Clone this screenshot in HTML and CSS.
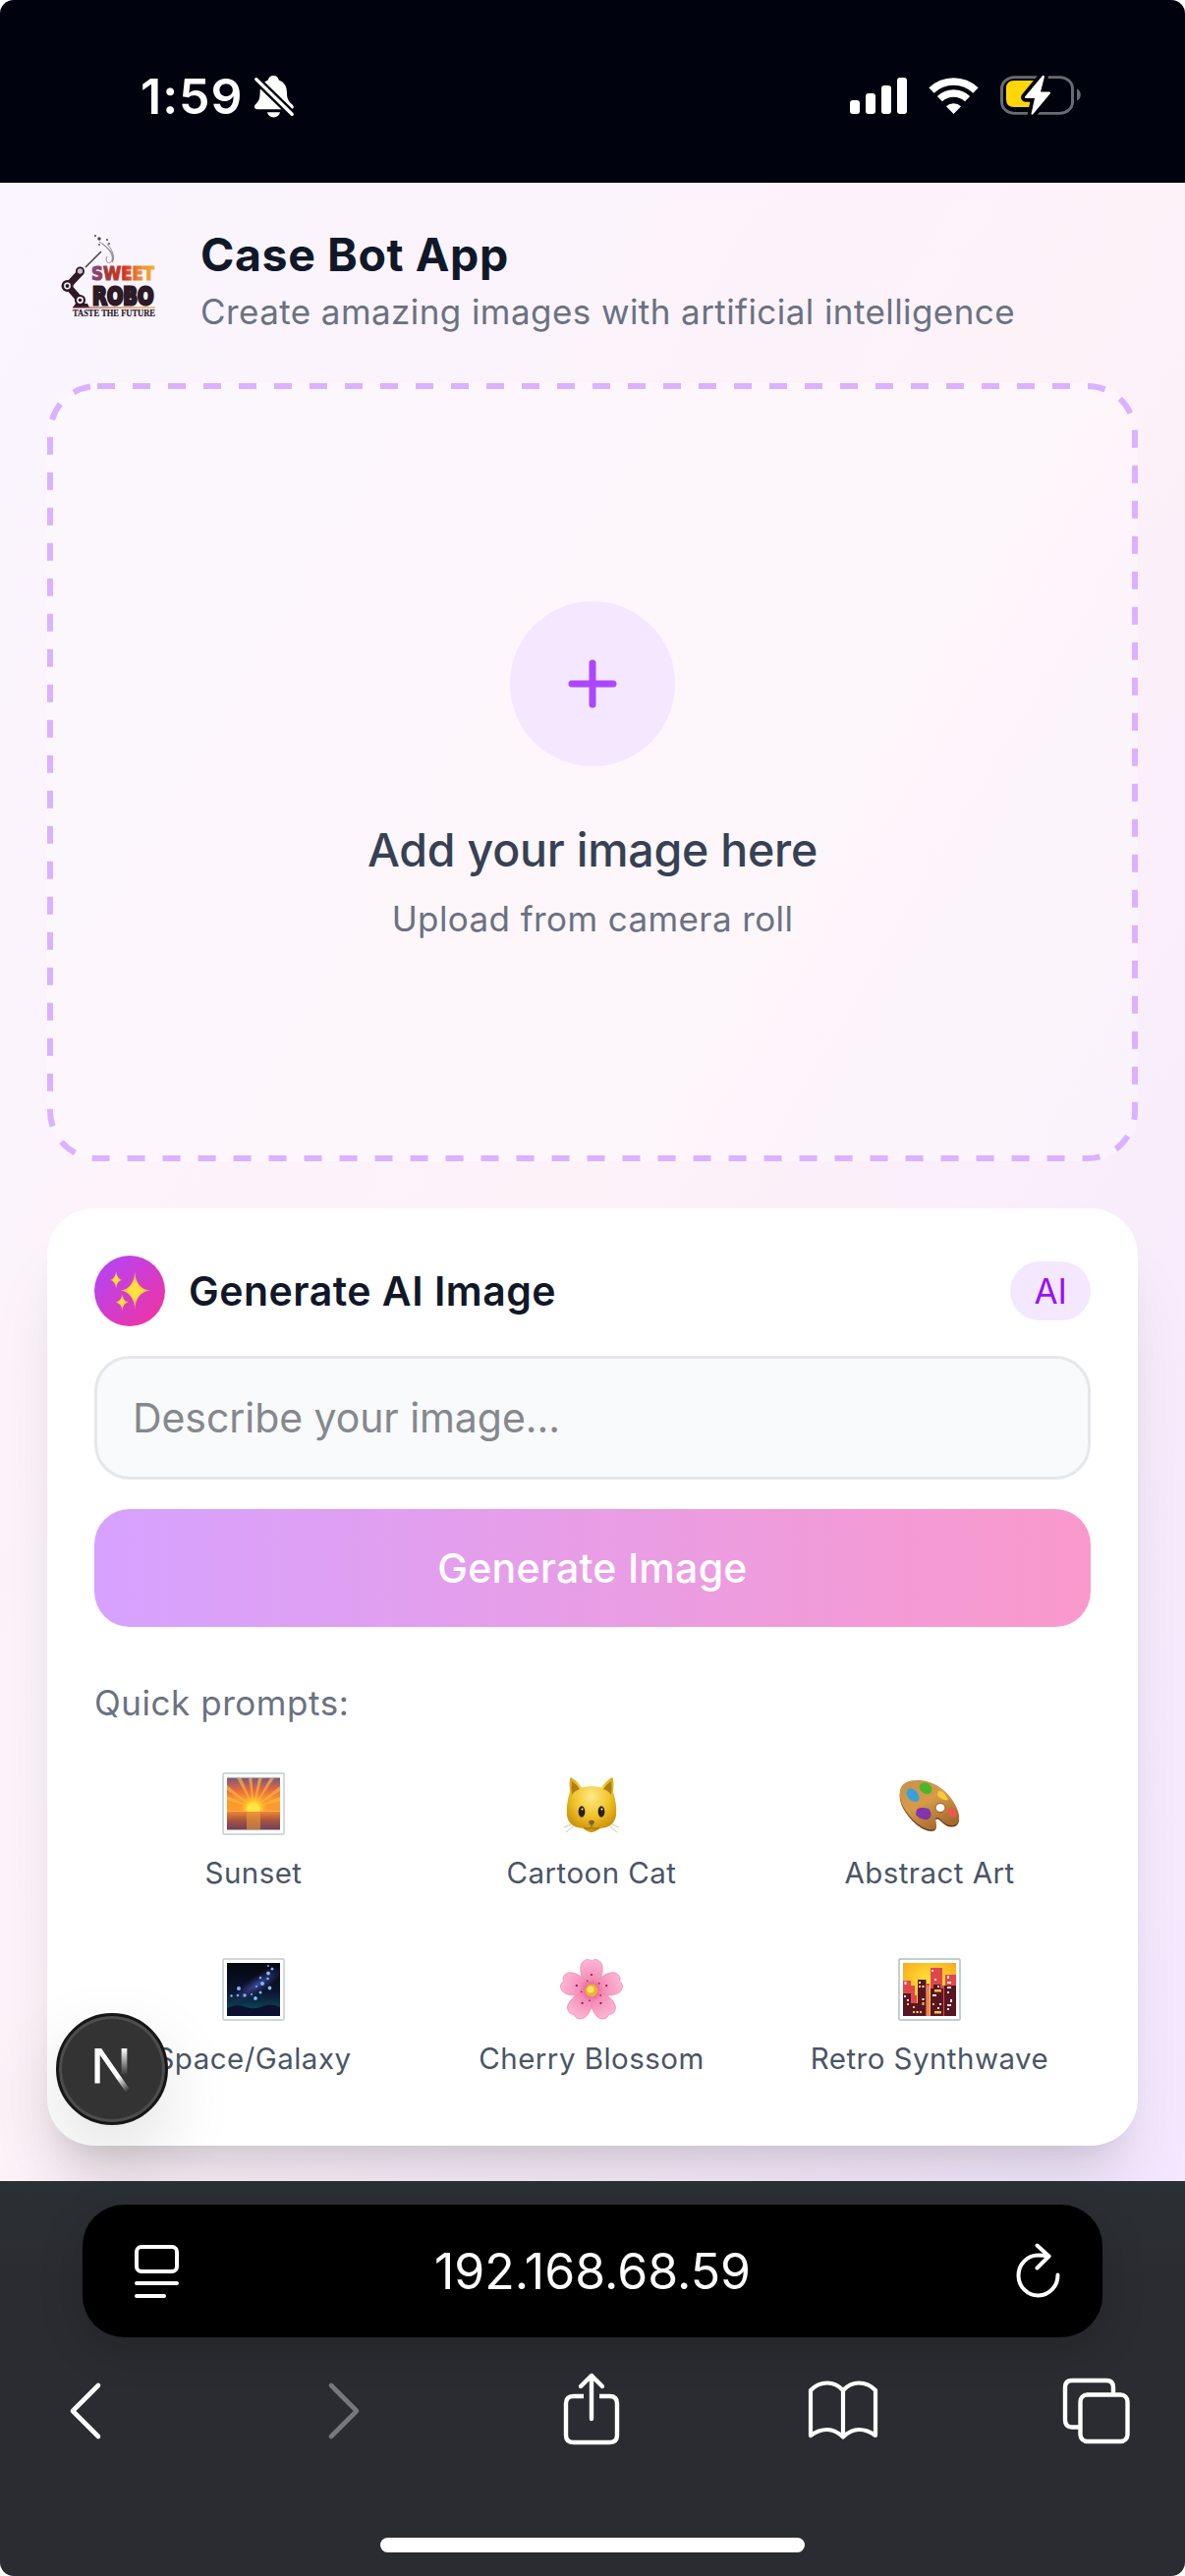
FILE: index.html
```html
<!DOCTYPE html>
<html lang="en">
<head>
<meta charset="utf-8">
<title>Case Bot App</title>
<link rel="stylesheet" href="styles.css">
</head>
<body>
<div class="screen">
  <div class="status">
    <div class="status-left">
      <span class="clock">1:59</span>
      <svg class="bell" width="40" height="43" viewBox="0 0 40 43">
        <path d="M19.3 0C22.3 0 24.4 2 24.8 4.6C30.6 6.8 33 11.6 33 17.5C33 24.5 35.2 26.6 38.6 29.6C41 32 39.6 34.2 37 34.2H3C0 34.2-1 31.4 1 29.3C4 26.3 5.6 24 5.6 17.5C5.6 11.6 8.4 6.8 13.8 4.6C14.2 2 16.3 0 19.3 0Z" fill="#fff"/>
        <path d="M13 37.3H26C25.4 40.4 22.7 42.4 19.5 42.4S13.6 40.4 13 37.3Z" fill="#fff"/>
        <path d="M1.6 3.6L38.4 39.4" stroke="#00030d" stroke-width="8.200"/>
        <path d="M1.8 3.6L38.2 39.2" stroke="#fff" stroke-width="3.4" stroke-linecap="round"/>
      </svg>
    </div>
    <div class="status-right">
      <svg width="58" height="38" viewBox="0 0 58 38" fill="#fff">
        <rect x="0" y="23" width="10" height="14" rx="3"/><rect x="16" y="16" width="10" height="21" rx="3"/><rect x="32" y="8" width="10" height="29" rx="3"/><rect x="48" y="0" width="10" height="37" rx="3"/>
      </svg>
      <svg class="wifi" width="51" height="38" viewBox="0 0 51 38" fill="none" stroke="#fff">
        <path d="M3 13.1A32.5 32.5 0 0 1 48 13.1" stroke-width="7.6"/>
        <path d="M11.4 21.7A20.3 20.3 0 0 1 39.6 21.7" stroke-width="7.4"/>
        <path d="M25.5 37L17.9 29.2A11 11 0 0 1 33.1 29.2Z" fill="#fff" stroke="none"/>
      </svg>
      <svg class="battery" width="82" height="42" viewBox="0 0 82 42">
        <rect x="1.5" y="2.5" width="72" height="41" rx="13" fill="none" stroke="#696b73" stroke-width="3" transform="translate(0 .3) scale(1 .9)"/>
        <path d="M78 14.5C83 16 83 25 78 26.500Z" fill="#696b73"/>
        <path d="M14 6H36V33H14Q6 33 6 25V14Q6 6 14 6Z" fill="#ffd60a"/>
        <path d="M43 1L25 22.500Q24.500 24 26 24H35L31.500 40Q32 41.500 33.500 40L51 19Q51.500 17.500 50 17.500H41L45 2Q44.500 0 43 1Z" fill="#fff" stroke="#00030d" stroke-width="7.500" paint-order="stroke"/>
      </svg>
    </div>
  </div>

  <main class="page">
    <header class="header">
      <svg class="logo" width="120" height="120" viewBox="0 0 120 120">
        <defs>
          <linearGradient id="sweet" x1="0" x2="1"><stop offset="0" stop-color="#7b4a86"/><stop offset=".3" stop-color="#a83a2c"/><stop offset=".52" stop-color="#d8321f"/><stop offset=".75" stop-color="#e88532"/><stop offset="1" stop-color="#f6b02c"/></linearGradient>
          <linearGradient id="rule" x1="0" x2="1"><stop offset="0" stop-color="#8d3a4a"/><stop offset="1" stop-color="#f0a030"/></linearGradient>
        </defs>
        <g fill="none" stroke="#77717c" stroke-width=".8">
          <path d="M53 24C61 29 68 37 66 43C63 49 58 43 61 39"/><path d="M56 26C64 31 70 39 66 45"/><path d="M61 26C67 33 69 40 66 45"/>
        </g>
        <g fill="#4b4350"><circle cx="49" cy="18" r="1"/><circle cx="53" cy="21" r="1.700"/><circle cx="61" cy="22" r="1"/><circle cx="63" cy="26" r="1"/><circle cx="53" cy="27" r=".9"/></g>
        <path d="M39 50L55 34" stroke="#4a3c46" stroke-width="1.6"/>
        <g stroke="#2c1a26" fill="none">
          <path d="M35 54L21 69L34 84" stroke-width="7"/>
          <circle cx="20.500" cy="69" r="4.700" stroke-width="2.600" fill="#faf4fe"/><circle cx="33.500" cy="83.500" r="4.500" stroke-width="2.200" fill="#faf4fe"/>
          <circle cx="33.500" cy="54" r="3.600" stroke-width="1.800" fill="#c9bfca"/>
        </g>
        <circle cx="20.500" cy="69" r="1.900" fill="#2c1a26"/><circle cx="33.500" cy="83.500" r="1.800" fill="#2c1a26"/>
        <path d="M26 91L29 87H41L43 91Z" fill="#2c1a26"/>
        <text x="45" y="63" class="logo-sweet" textLength="64" lengthAdjust="spacingAndGlyphs" fill="url(#sweet)" stroke="url(#sweet)">SWEET</text>
        <text x="46" y="87.500" class="logo-robo" textLength="62.500" lengthAdjust="spacingAndGlyphs">ROBO</text>
        <rect x="26" y="90.500" width="84" height="1.200" fill="url(#rule)"/>
        <text x="26" y="99.500" class="logo-tag" textLength="84" lengthAdjust="spacingAndGlyphs">TASTE THE FUTURE</text>
      </svg>
      <div class="titles">
        <h1 class="title">Case Bot App</h1>
        <p class="subtitle">Create amazing images with artificial intelligence</p>
      </div>
    </header>

    <section class="upload">
      <svg class="upload-border" width="1110" height="792" viewBox="0 0 1110 792"><rect x="3" y="3" width="1104" height="786" rx="48" fill="none" stroke="#dab2ff" stroke-width="6" stroke-dasharray="18 18"/></svg>
      <div class="plus">
        <svg width="84" height="84" viewBox="0 0 24 24" fill="none" stroke="#ad46ff" stroke-width="2" stroke-linecap="round"><path d="M12 6v12M6 12h12"/></svg>
      </div>
      <p class="upload-title">Add your image here</p>
      <p class="upload-sub">Upload from camera roll</p>
    </section>

    <section class="card">
      <div class="card-head">
        <div class="spark">
          <svg width="42" height="44" viewBox="0 0 44 46">
            <defs><radialGradient id="gold"><stop offset="0" stop-color="#ffe83a"/><stop offset=".45" stop-color="#ffd83c"/><stop offset="1" stop-color="#ee9a4a"/></radialGradient></defs>
            <g fill="url(#gold)">
              <path d="M27.500 2Q28.400 20.500 43.500 22.500Q28.400 24.500 27.500 43Q26.600 24.500 12 22.500Q26.600 20.500 27.500 2Z"/>
              <path d="M7.500 2Q8.300 10.200 14 11.200Q8.300 12.200 7.500 20.500Q6.700 12.200 1 11.200Q6.700 10.200 7.500 2Z"/>
              <path d="M14 26.500Q14.800 34 20.500 35Q14.800 36 14 44Q13.200 36 7 35Q13.200 34 14 26.500Z"/>
            </g>
          </svg>
        </div>
        <h2 class="card-title">Generate AI Image</h2>
        <span class="pill">AI</span>
      </div>
      <div class="field">Describe your image...</div>
      <div class="button">Generate Image</div>
      <p class="quick">Quick prompts:</p>
      <div class="prompts">
        <div class="prompt">
          <svg width="64" height="64" viewBox="0 0 64 64">
            <defs>
              <linearGradient id="sky" x2="0" y2="1"><stop offset="0" stop-color="#75597f"/><stop offset=".35" stop-color="#e2683f"/><stop offset=".65" stop-color="#fc9a2c"/></linearGradient>
              <linearGradient id="sea" x2="0" y2="1"><stop offset="0" stop-color="#f08a32"/><stop offset=".5" stop-color="#a9523f"/><stop offset="1" stop-color="#6d4157"/></linearGradient>
              <radialGradient id="sun"><stop offset="0" stop-color="#fff36a"/><stop offset=".45" stop-color="#ffd331"/><stop offset="1" stop-color="#ffa52a" stop-opacity="0"/></radialGradient>
            </defs>
            <rect x="1" y="1" width="62" height="62" rx="1" fill="#fff" stroke="#c3cbd0" stroke-width="1.500"/>
            <rect x="5" y="5.500" width="54" height="34" fill="url(#sky)"/>
            <g fill="#ffb84a" opacity=".65"><path d="M32 36L27 5.500H30.500ZM32 36L37 5.500H41ZM32 36L15 5.500H19.500ZM32 36L49 5.500H53.500ZM32 36L5 13V18ZM32 36L59 14V19ZM32 36L5 24V28ZM32 36L59 25V29Z"/></g>
            <rect x="5" y="39.500" width="54" height="19" fill="url(#sea)"/>
            <rect x="25" y="40" width="14" height="18.500" fill="#f0a23a" opacity=".55"/>
            <clipPath id="above"><rect x="5" y="5" width="54" height="34.700"/></clipPath>
            <g clip-path="url(#above)"><circle cx="32" cy="37" r="15" fill="url(#sun)"/><circle cx="32" cy="37.500" r="6.500" fill="#ffe63e"/></g>
          </svg>
          <span>Sunset</span>
        </div>
        <div class="prompt">
          <svg width="64" height="64" viewBox="0 0 64 64">
            <defs><radialGradient id="fur" cx=".5" cy=".35" r=".65"><stop offset="0" stop-color="#ffe98a"/><stop offset=".55" stop-color="#f0c52a"/><stop offset="1" stop-color="#c98f0a"/></radialGradient></defs>
            <path d="M10 20Q9 10 10.500 5Q17 8 22 15.500Q32 12.500 42 15.500Q47 8 53.500 5Q55 10 54 20Q58 32 57 44Q55 56 41 57Q35 61 32 61Q29 61 23 57Q9 56 7 44Q6 32 10 20Z" fill="url(#fur)"/>
            <path d="M12 9Q17 12 20 17Q14 19 12 23Q11 15 12 9ZM52 9Q47 12 44 17Q50 19 52 23Q53 15 52 9Z" fill="#b07d12"/>
            <ellipse cx="22" cy="40" rx="3.400" ry="5.800" fill="#2b2016"/><ellipse cx="42" cy="40" rx="3.400" ry="5.800" fill="#2b2016"/>
            <circle cx="22.500" cy="37.500" r="1" fill="#fff"/><circle cx="42.500" cy="37.500" r="1" fill="#fff"/>
            <path d="M29 50Q32 47.500 35 50Q34.500 53.500 32 54Q29.500 53.500 29 50Z" fill="#7b6239"/>
            <path d="M32 54V56Q28 59 24.500 56M32 56Q36 59 39.500 56" fill="none" stroke="#a67810" stroke-width="1.300"/>
            <path d="M13 55L6 61M11 53L4 56M51 55L58 61M53 53L60 56" stroke="#c9bda2" stroke-width=".9"/>
          </svg>
          <span>Cartoon Cat</span>
        </div>
        <div class="prompt">
          <svg width="64" height="64" viewBox="0 0 64 64">
            <defs><linearGradient id="wood" x2=".6" y2="1"><stop offset="0" stop-color="#c8904b"/><stop offset=".5" stop-color="#d69b4a"/><stop offset="1" stop-color="#a76a2b"/></linearGradient></defs>
            <g transform="translate(0 -1)">
            <path d="M2 20C3 10 15 8 26 9.500C42 12 55 25 60 38C64 48 62 55 55 55C48 56 44 48 40 47C36 47 40 53 38.500 57C36 62 26 59 18 52C7 42 0 30 2 20Z" transform="translate(0 1.500)" fill="#5e3b1e"/>
            <path d="M2 20C3 10 15 8 26 9.500C42 12 55 25 60 38C64 48 62 55 55 55C48 56 44 48 40 47C36 47 40 53 38.500 57C36 62 26 59 18 52C7 42 0 30 2 20Z" fill="url(#wood)"/>
            <ellipse cx="43" cy="37" rx="5" ry="4.500" fill="#fff" stroke="#8c5a2a"/>
            <path d="M9 20C11 15 17 18 19 21C22 25 23 30 18 31C12 30 7 26 9 20Z" fill="#35a3da"/>
            <path d="M22 14C25 9 32 12 34 16C35 20 33 24 28 23C23 21 21 18 22 14Z" fill="#49b72c"/>
            <path d="M41 20C45 19 49 24 51 29C48 30 42 28 40 24Z" fill="#f3cb3c"/>
            <path d="M19 39C22 36 27 37 31 38C34 41 35 47 30 49C24 50 20 46 18 44Z" fill="#8134ad"/>
            <path d="M51 38C55 34 59 40 60 44C59 48 55 47 52 44Z" fill="#f0574c"/>
            </g>
          </svg>
          <span>Abstract Art</span>
        </div>
        <div class="prompt">
          <svg width="64" height="64" viewBox="0 0 64 64">
            <defs><linearGradient id="night" x2="0" y2="1"><stop offset="0" stop-color="#05060f"/><stop offset=".55" stop-color="#0b1530"/><stop offset=".85" stop-color="#0c4055"/></linearGradient><radialGradient id="milky"><stop offset="0" stop-color="#4a5cb8"/><stop offset="1" stop-color="#33337c" stop-opacity="0"/></radialGradient></defs>
            <rect x="1" y="1" width="62" height="62" rx="1" fill="#fff" stroke="#c3cbd0" stroke-width="1.500"/>
            <rect x="5" y="5" width="54" height="54" fill="url(#night)"/>
            <clipPath id="nightbox"><rect x="5" y="5" width="54" height="54"/></clipPath>
            <g clip-path="url(#nightbox)"><ellipse cx="36" cy="27" rx="34" ry="9" transform="rotate(-33 36 27)" fill="url(#milky)" opacity=".8"/>
            <path d="M5 51Q15 46 24 50Q34 53 42 49Q50 46 59 50V59H5Z" fill="#0a1030"/></g>
            <g fill="#7db9f5"><circle cx="17" cy="31" r="2"/><circle cx="23" cy="38" r="1.700"/><circle cx="16" cy="38" r="1.200"/><circle cx="9.500" cy="38.500" r="1.200"/><circle cx="30" cy="37" r="1"/><circle cx="34" cy="41" r="1.900"/><circle cx="39" cy="35" r="1.500"/><circle cx="41" cy="26" r="2"/><circle cx="35" cy="29" r="1"/><circle cx="46.500" cy="21" r="1.300"/><circle cx="47" cy="15.500" r="1.900"/><circle cx="48.500" cy="30.500" r="1.900"/><circle cx="51" cy="11" r="1.500"/><circle cx="39" cy="20" r="1.200"/><circle cx="47" cy="8" r="1"/></g>
          </svg>
          <span>Space/Galaxy</span>
        </div>
        <div class="prompt">
          <svg width="64" height="64" viewBox="0 0 64 64">
            <defs>
              <radialGradient id="petalfill" gradientUnits="userSpaceOnUse" cx="32" cy="32" r="34"><stop offset="0" stop-color="#e0447c"/><stop offset=".35" stop-color="#f58dba"/><stop offset="1" stop-color="#fdbcd8"/></radialGradient>
              <g id="petal"><path d="M32 32C24 26 18 13 22 4Q27 -2 32 2Q37 -2 42 4C46 13 40 26 32 32Z" fill="url(#petalfill)" stroke="#ef84b2" stroke-width=".7"/><circle cx="32" cy="16" r="1.100" fill="#7d2149"/><circle cx="27.500" cy="22.500" r=".9" fill="#8d2f55"/></g>
            </defs>
            <g transform="translate(0 1)"><use href="#petal"/><use href="#petal" transform="rotate(72 32 32)"/><use href="#petal" transform="rotate(144 32 32)"/><use href="#petal" transform="rotate(216 32 32)"/><use href="#petal" transform="rotate(288 32 32)"/>
            <circle cx="32" cy="32" r="6.500" fill="#e9b32f"/><circle cx="31" cy="31" r="3.500" fill="#ffe06a"/></g>
          </svg>
          <span>Cherry Blossom</span>
        </div>
        <div class="prompt">
          <svg width="64" height="64" viewBox="0 0 64 64">
            <defs><radialGradient id="dusk" cx=".5" cy=".4" r=".7"><stop offset="0" stop-color="#ffe93b"/><stop offset="1" stop-color="#f9a51b"/></radialGradient></defs>
            <rect x="1" y="1" width="62" height="62" rx="1" fill="#fff" stroke="#aebfc6" stroke-width="1.500"/>
            <rect x="5" y="5" width="54" height="54" fill="url(#dusk)"/>
            <path d="M5 23H13V28H17V38H19V59H5ZM29 26H32V59H29ZM33 10H45V59H33ZM48 17H59V59H48ZM45 28H48V59H45Z" fill="#e0474c"/>
            <path d="M29 28H32V59H29Z" fill="#ee7f62"/>
            <path d="M5 36H13V46H20V22H28.500V59H5ZM33 31H36V27H43V31H46V59H33ZM47 28H59V59H47Z" fill="#591523"/>
            <g fill="#ffe7e0"><path d="M6.500 24H8.500V27H6.500ZM6 38H8V40H6ZM9 42H11V44H9ZM21 24H23V26H21ZM24.500 28H26.500V30H24.500ZM24.500 41H26.500V43H24.500ZM18.500 54H20.500V56H18.500ZM34 12H36V14H34ZM37 21H39V23H37ZM40 28H42V30H40ZM35 37H39V39H35ZM42 46H44V48H42ZM40 50H42V52H40ZM50 18H52V21H50ZM50 24H54V26H50ZM50 29H54V31H50ZM50 34H52V36H50ZM53 42H55V45H53ZM50 47H54V49H50ZM50 51H52V53H50Z"/></g>
            <g fill="#f2c83a"><path d="M21 28H23V30H21ZM9 46H11V48H9ZM24.500 45H26.500V48H24.500ZM15 49H17V51H15ZM15 54H17V56H15ZM22 54H24V56H22ZM37 32H44V34.500H37ZM35 46H37V48H35ZM37 54H44V56.500H37Z"/></g>
          </svg>
          <span>Retro Synthwave</span>
        </div>
      </div>
    </section>

    <div class="dev-badge">
      <svg width="40" height="48" viewBox="0 0 42 46" preserveAspectRatio="none" fill="none">
        <defs>
          <linearGradient id="stem" x1="0" y1="0" x2="0" y2="1"><stop offset="0" stop-color="#fff"/><stop offset="1" stop-color="#fff" stop-opacity="0"/></linearGradient>
          <linearGradient id="slant" gradientUnits="userSpaceOnUse" x1="27" y1="28" x2="37" y2="42"><stop offset="0" stop-color="#fff"/><stop offset="1" stop-color="#fff" stop-opacity="0"/></linearGradient>
        </defs>
        <rect x="29" y="1" width="6" height="26" fill="url(#stem)"/>
        <path d="M0.500 35V1H7.500L38 41L34 44L6 7.500V35Z" fill="url(#slant)"/>
      </svg>
    </div>
  </main>

  <div class="toolbar">
    <div class="urlbar">
      <svg class="page-icon" width="46" height="56" viewBox="0 0 46 56" fill="none" stroke="#fff" stroke-width="4" stroke-linecap="round"><rect x="2" y="2" width="41" height="25" rx="5"/><path d="M2 39H43M2 52H30"/></svg>
      <span class="url">192.168.68.59</span>
      <svg width="46" height="56" viewBox="0 0 46 56" fill="none" stroke="#fff" stroke-width="4" stroke-linecap="round" stroke-linejoin="round"><path d="M42.500 31.500A20 20.500 0 1 1 22.500 11.500Q28 11.500 33.500 12.500"/><path d="M21.500 1.500L33.500 12.500L21.500 24.500"/></svg>
    </div>
    <div class="actions">
      <svg width="33" height="58" viewBox="0 0 33 58" fill="none" stroke="#fff" stroke-width="4.600" stroke-linecap="round" stroke-linejoin="round"><path d="M30 3L4 29L30 55"/></svg>
      <svg class="forward" width="33" height="58" viewBox="0 0 33 58" fill="none" stroke="#77787c" stroke-width="4.600" stroke-linecap="round" stroke-linejoin="round"><path d="M3 3L29 29L3 55"/></svg>
      <svg class="share" width="58" height="74" viewBox="0 0 58 74" fill="none" stroke="#fff" stroke-width="4.400" stroke-linecap="round" stroke-linejoin="round"><path d="M21 24H10.500Q3 24 3 31.500V63.500Q3 71 10.500 71H47.500Q55 71 55 63.500V31.500Q55 24 47.500 24H37" stroke-linecap="butt"/><path d="M29 47V3M18 14L29 3L40 14"/></svg>
      <svg class="book" width="72" height="62" viewBox="0 0 72 62" fill="none" stroke="#fff" stroke-width="4.200" stroke-linecap="round" stroke-linejoin="round"><path d="M36 58.500Q28 51 20 51Q11 51 3 57V11Q10 3.500 20 3.500Q29 3.500 36 11Q43 3.500 52 3.500Q62 3.500 69 11V57Q61 51 52 51Q44 51 36 58.500V11"/></svg>
      <svg class="tabs" width="70" height="68" viewBox="0 0 70 68" fill="none" stroke="#fff" stroke-width="4.400"><path d="M52 16V10Q52 3 45 3H10Q3 3 3 10V43Q3 50.500 10 50.500H17"/><rect x="18.500" y="17.500" width="48" height="47.500" rx="7"/></svg>
    </div>
    <div class="home"></div>
  </div>
</div>
</body>
</html>
```
FILE: styles.css
```css
* { box-sizing: border-box; margin: 0; padding: 0; }
body { background: #fff; font-family: Inter, "Liberation Sans", sans-serif; }
svg { display: block; flex: none; overflow: visible; }
.screen { width: 1206px; height: 2622px; display: flex; flex-direction: column; border-radius: 14px; overflow: hidden; }

.status { height: 186px; background: #00030d; display: flex; justify-content: space-between; padding: 76px 106px 0 143px; }
.status-left { display: flex; gap: 11px; }
.clock { color: #fff; font-size: 50px; font-weight: 600; line-height: 44px; letter-spacing: 1px; }
.bell { margin-top: 1px; }
.status-right { display: flex; padding-top: 3px; }
.wifi { margin-left: 22px; }
.battery { margin: -3px 0 0 22px; }

.page { height: 2034px; position: relative; overflow: hidden; padding: 0 48px; background: linear-gradient(to bottom right, #faf5ff, #fdf2f8 50%, #f3e8ff); }
.header { height: 204px; display: flex; gap: 36px; padding-top: 36px; }
.logo-sweet { font: 900 19px "DejaVu Sans", sans-serif; stroke-width: 1.2; }
.logo-robo { font: 900 25px "DejaVu Sans", sans-serif; fill: #2c1a26; stroke: #2c1a26; stroke-width: 3; }
.logo-tag { font: 700 9.5px "Liberation Serif", serif; fill: #2c1a26; stroke: #2c1a26; stroke-width: .2; }
.titles { padding-top: 7px; }
.title { font-size: 46.5px; font-weight: 700; line-height: 60px; letter-spacing: .59px; color: #101828; }
.subtitle { margin-top: 4px; font-size: 35px; line-height: 48px; letter-spacing: .42px; color: #6a7282; white-space: nowrap; }

.upload { height: 792px; position: relative; border-radius: 51px; background: rgba(255,255,255,.3); display: flex; flex-direction: column; align-items: center; padding-top: 222px; }
.upload-border { position: absolute; left: 0; top: 0; }
.plus { width: 168px; height: 168px; border-radius: 50%; background: #f3e8ff; display: flex; align-items: center; justify-content: center; }
.upload-title { margin-top: 55px; font-size: 46.5px; font-weight: 500; line-height: 60px; letter-spacing: -.23px; color: #364153; }
.upload-sub { margin-top: 16px; font-size: 35px; line-height: 48px; letter-spacing: .4px; color: #6a7282; }

.card { margin-top: 48px; height: 954px; border-radius: 48px; background: #fff; padding: 48px; box-shadow: 0 60px 75px -15px rgba(0,0,0,.1), 0 24px 30px -18px rgba(0,0,0,.1); }
.card-head { height: 72px; display: flex; align-items: center; }
.spark { width: 72px; height: 72px; border-radius: 50%; background: linear-gradient(to bottom right, #ad46ff, #f6339a); display: flex; align-items: center; justify-content: center; }
.card-title { flex: 1; margin-left: 24px; font-size: 41px; font-weight: 600; line-height: 60px; letter-spacing: .5px; color: #101828; }
.pill { height: 60px; padding: 0 24px; border-radius: 30px; background: #f3e8ff; color: #9810fa; font-size: 35px; line-height: 60px; }
.field { margin-top: 30px; height: 126px; border: 3px solid #e5e7eb; border-radius: 36px; background: #f9fafb; padding: 0 36px; font-size: 41px; line-height: 120px; letter-spacing: -.07px; color: #85888e; }
.button { margin-top: 30px; height: 120px; border-radius: 36px; background: linear-gradient(to right, #d6a2ff, #fa99cc); color: #fff; font-size: 41px; font-weight: 500; line-height: 120px; letter-spacing: .29px; text-align: center; }
.quick { margin-top: 53px; font-size: 35px; line-height: 48px; letter-spacing: .54px; color: #6a7282; }
.prompts { margin: 19px 1px 0 -1px; display: grid; grid-template-columns: repeat(3, 1fr); grid-auto-rows: 171px; gap: 18px; }
.prompt { display: flex; flex-direction: column; align-items: center; padding-top: 28px; gap: 14px; font-size: 29.5px; line-height: 48px; letter-spacing: .46px; color: #4a5565; }

.dev-badge { position: absolute; left: 57px; top: 1863px; width: 114px; height: 114px; border-radius: 50%; background: #333; border: 3px solid #171717; box-shadow: inset 0 0 0 3px #4d4d4d, 0 30px 75px rgba(0,0,0,.12); display: flex; align-items: center; justify-content: center; padding: 3px 0 0 3px; }

.toolbar { flex: 1; background: linear-gradient(#2b3035, #2b2c31 100px); padding: 24px 54px 24px 70px; display: flex; flex-direction: column; }
.urlbar { height: 135px; margin: 0 30px 0 14px; border-radius: 42px; background: #000; box-shadow: 0 12px 45px rgba(0,0,0,.16); display: flex; align-items: center; justify-content: space-between; padding: 0 42px 0 53px; }
.page-icon { margin-top: 2px; }
.url { color: #fff; font-size: 50px; line-height: 60px; margin-right: 11px; }
.actions { height: 150px; display: flex; align-items: center; }
.forward { margin-left: 231px; }
.share { margin: 0 0 4px 206px; }
.book { margin: 0 0 2px 191px; }
.tabs { margin-left: 187px; }
.home { width: 432px; height: 15px; border-radius: 8px; background: #fff; margin: 54px auto 0; position: relative; left: -8px; }
```
